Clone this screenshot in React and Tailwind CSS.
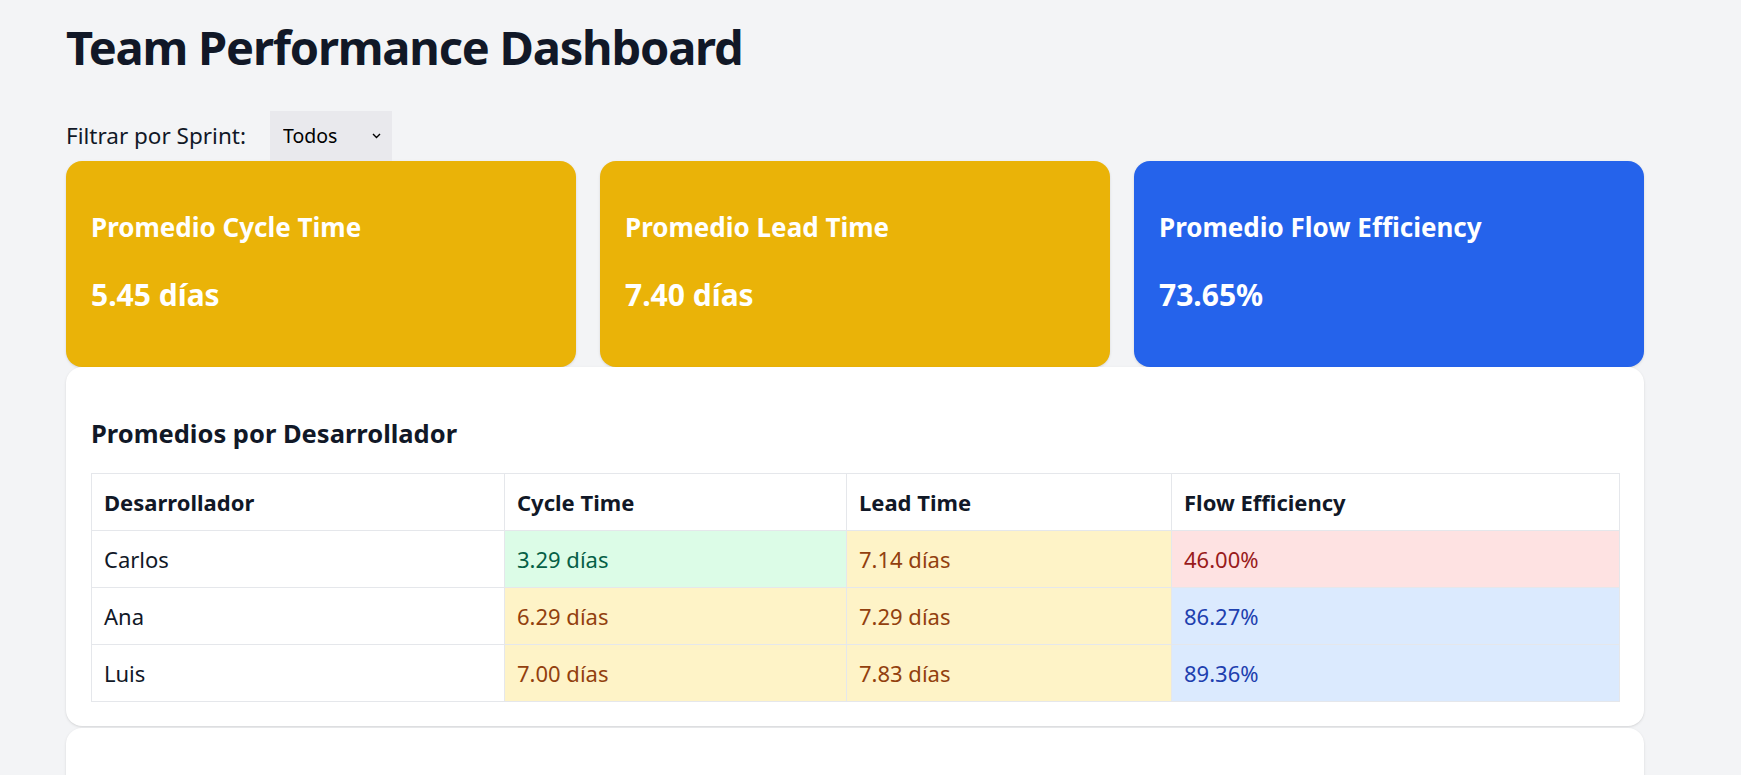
import React from 'react';

const rows = [
  {
    name: 'Carlos',
    cycle: { v: '3.29 días', c: 'bg-[#dcfce7] text-[#065f46]' },
    lead: { v: '7.14 días', c: 'bg-[#fef3c7] text-[#92400e]' },
    flow: { v: '46.00%', c: 'bg-[#fee2e2] text-[#991b1b]' },
  },
  {
    name: 'Ana',
    cycle: { v: '6.29 días', c: 'bg-[#fef3c7] text-[#92400e]' },
    lead: { v: '7.29 días', c: 'bg-[#fef3c7] text-[#92400e]' },
    flow: { v: '86.27%', c: 'bg-[#dbeafe] text-[#1e40af]' },
  },
  {
    name: 'Luis',
    cycle: { v: '7.00 días', c: 'bg-[#fef3c7] text-[#92400e]' },
    lead: { v: '7.83 días', c: 'bg-[#fef3c7] text-[#92400e]' },
    flow: { v: '89.36%', c: 'bg-[#dbeafe] text-[#1e40af]' },
  },
];

function StatCard({ title, value, color }) {
  return (
    <div className={`w-[510px] h-[206px] rounded-2xl shadow-sm text-white px-[25px] pt-[50px] ${color}`}>
      <h3 className="text-[26px] leading-[32px] font-bold">{title}</h3>
      <p className="mt-[34px] text-[30px] leading-[36px] font-bold">{value}</p>
    </div>
  );
}

export default function App() {
  return (
    <div className="min-h-screen bg-[#f3f4f6] text-[#111827] font-['Noto_Sans',sans-serif]">
      <div className="ml-[66px] w-[1578px] flex flex-col">
        <h1 className="mt-[18px] text-[47px] leading-[59px] font-bold tracking-[-1.2px]">Team Performance Dashboard</h1>

        <div className="mt-[34px] flex items-center gap-[24px]">
          <label className="text-[22.5px] leading-[30px]">Filtrar por Sprint:</label>
          <div className="relative w-[122px] h-[50px] bg-[#e9e9ed]">
            <select className="appearance-none w-full h-full bg-transparent pl-[13px] text-[19.5px] text-black outline-none">
              <option>Todos</option>
            </select>
            <svg
              className="pointer-events-none absolute right-[11px] top-[22px]"
              width="9"
              height="6"
              viewBox="0 0 9 6"
              fill="none"
            >
              <path d="M1 1l3.5 3.5L8 1" stroke="#000" strokeWidth="1.4" />
            </svg>
          </div>
        </div>

        <div className="flex gap-[24px]">
          <StatCard title="Promedio Cycle Time" value="5.45 días" color="bg-[#eab308]" />
          <StatCard title="Promedio Lead Time" value="7.40 días" color="bg-[#eab308]" />
          <StatCard title="Promedio Flow Efficiency" value="73.65%" color="bg-[#2563eb]" />
        </div>

        <div className="bg-white rounded-2xl shadow-sm px-[25px] pt-[51px] pb-[24px]">
          <h2 className="text-[25.5px] leading-[30px] font-bold">Promedios por Desarrollador</h2>
          <table className="mt-[25px] w-[1528px] table-fixed border-collapse text-[22px]">
            <colgroup>
              <col className="w-[413px]" />
              <col className="w-[342px]" />
              <col className="w-[325px]" />
              <col className="w-[448px]" />
            </colgroup>
            <thead>
              <tr className="h-[57px]">
                <th className="border border-[#e5e7eb] px-[12px] text-left font-bold">Desarrollador</th>
                <th className="border border-[#e5e7eb] px-[12px] text-left font-bold">Cycle Time</th>
                <th className="border border-[#e5e7eb] px-[12px] text-left font-bold">Lead Time</th>
                <th className="border border-[#e5e7eb] px-[12px] text-left font-bold">Flow Efficiency</th>
              </tr>
            </thead>
            <tbody>
              {rows.map((r) => (
                <tr key={r.name} className="h-[57px]">
                  <td className="border border-[#e5e7eb] px-[12px]">{r.name}</td>
                  <td className={`border border-[#e5e7eb] px-[12px] ${r.cycle.c}`}>{r.cycle.v}</td>
                  <td className={`border border-[#e5e7eb] px-[12px] ${r.lead.c}`}>{r.lead.v}</td>
                  <td className={`border border-[#e5e7eb] px-[12px] ${r.flow.c}`}>{r.flow.v}</td>
                </tr>
              ))}
            </tbody>
          </table>
        </div>

        <div className="mt-[2px] h-[320px] bg-white rounded-2xl shadow-sm" />
      </div>
    </div>
  );
}
